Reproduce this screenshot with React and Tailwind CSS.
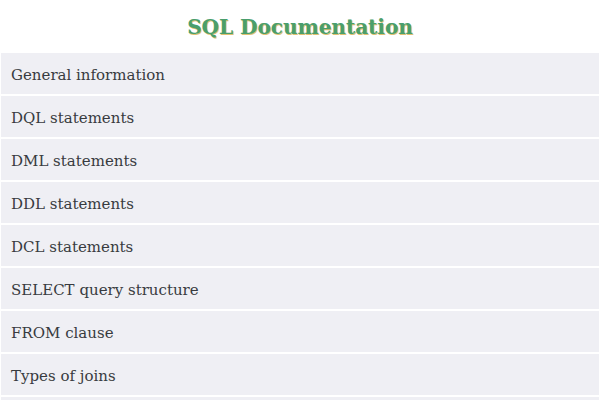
const items = [
  "General information",
  "DQL statements",
  "DML statements",
  "DDL statements",
  "DCL statements",
  "SELECT query structure",
  "FROM clause",
  "Types of joins",
  "WHERE clause",
];

export default function App() {
  return (
    <div className="min-h-screen bg-white font-['DejaVu_Serif',serif]">
      <h1 className="pt-[10px] pb-[9px] text-center text-[20px] font-bold leading-[34px] text-[#4a9e6c] [text-shadow:1px_1px_0_#e0c070]">
        SQL Documentation
      </h1>
      <ul className="flex flex-col gap-[2px] px-[1px]">
        {items.map((t) => (
          <li key={t} className="flex h-[41px] items-center bg-[#efeff4] px-[10px] pt-[3px] text-[15px] text-[#383b40]">
            {t}
          </li>
        ))}
      </ul>
    </div>
  );
}
